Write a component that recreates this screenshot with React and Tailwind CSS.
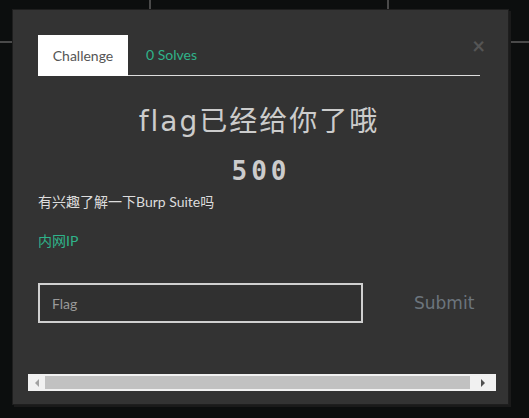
export default function App() {
  return (
    <div className="relative w-[529px] h-[418px] bg-[#0c0e0e] overflow-hidden" style={{ fontFamily: 'Lato, "Noto Sans CJK SC", sans-serif' }}>
      {/* background grid lines */}
      <div className="absolute left-[149px] top-0 w-[2px] h-[10px] bg-[#4a4a4a]" />
      <div className="absolute left-[387px] top-0 w-[2px] h-[10px] bg-[#4a4a4a]" />
      <div className="absolute left-0 top-[41px] w-[14px] h-[2px] bg-[#4a4a4a]" />
      <div className="absolute left-[508px] top-[41px] w-[21px] h-[2px] bg-[#4a4a4a]" />

      <div className="relative ml-[12px] mt-[9px] w-[497px] h-[396px] bg-[#333333] border border-[#1e1e1e] shadow-[2px_2px_0_#1a1a1a]">
        <div className="absolute right-[23px] top-[25px] text-[22px] font-bold leading-none text-[#555555]">×</div>

        <div className="pl-[25px] pr-[28px] pt-[25px]">
          <div className="flex items-end border-b border-[#dedede] h-[41px]">
            <div className="w-[90px] h-[41px] bg-white flex items-center justify-center text-[14px] text-[#555555] -mb-px">Challenge</div>
            <div className="ml-[18px] h-[41px] flex items-center text-[14px] text-[#2fb38a]">0 Solves</div>
          </div>

          <div className="mt-[29px] text-center text-[28px] leading-[34px] tracking-[2px] text-[#cccccc]" style={{ fontFamily: '"DejaVu Sans", "Noto Sans CJK SC", sans-serif' }}>flag已经给你了哦</div>
          <div className="mt-[17px] text-center text-[26px] leading-[30px] font-bold text-[#cccccc] tracking-[4px] pl-[4px]" style={{ fontFamily: '"DejaVu Sans Mono", monospace' }}>500</div>

          <div className="mt-[6px] text-[14px] leading-[20px] text-[#dddddd]">有兴趣了解一下Burp Suite吗</div>
          <div className="mt-[19px] text-[14px] leading-[20px] text-[#2fb38a]">内网IP</div>

          <div className="mt-[32px] flex items-center">
            <div className="w-[325px] h-[40px] border-2 border-[#d0d0d0] bg-[#303030] flex items-center pl-[12px] text-[14px] text-[#9a9a9a]">Flag</div>
            <div className="ml-[51px] mt-[2px] text-[17px] text-[#6c757d]" style={{ fontFamily: '"DejaVu Sans", sans-serif' }}>Submit</div>
          </div>
        </div>

        <div className="absolute left-[15px] top-[364px] w-[468px] h-[17px] bg-[#f1f1f1] flex items-center">
          <div className="w-[17px] h-[17px] flex items-center justify-center">
            <div className="w-0 h-0 border-y-[4px] border-y-transparent border-r-[4px] border-r-[#a3a3a3]" />
          </div>
          <div className="h-[13px] w-[425px] bg-[#c1c1c1]" />
          <div className="flex-1 h-[17px] flex items-center justify-center">
            <div className="w-0 h-0 border-y-[4px] border-y-transparent border-l-[4px] border-l-[#505050]" />
          </div>
        </div>
      </div>
    </div>
  );
}
